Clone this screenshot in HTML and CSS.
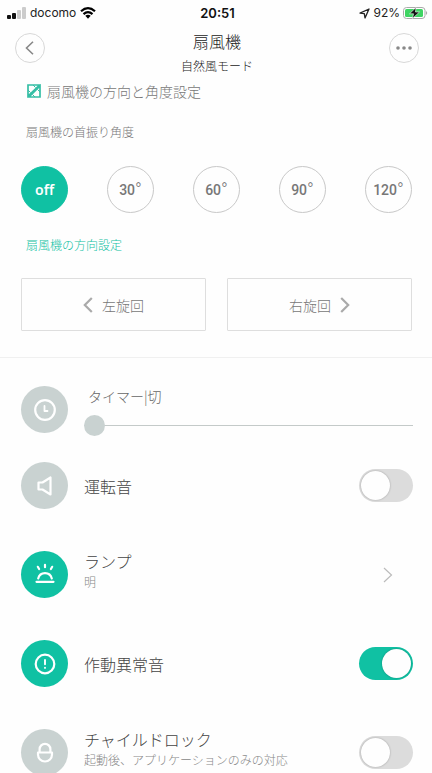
FILE: index.html
```html
<!DOCTYPE html>
<html lang="ja">
<head>
<meta charset="utf-8">
<meta name="viewport" content="width=device-width, initial-scale=1">
<title>扇風機</title>
<link rel="stylesheet" href="styles.css">
</head>
<body>
<div class="status">
  <div class="status-left">
    <svg width="19" height="12" viewBox="0 0 19 12"><g fill="#111"><rect x="0" y="8" width="4" height="4" rx="1"/><rect x="5" y="6" width="4" height="6" rx="1"/></g><g fill="#ccc"><rect x="10" y="3" width="4" height="9" rx="1"/><rect x="15" y="0" width="4" height="12" rx="1"/></g></svg>
    <span>docomo</span>
    <svg width="16" height="12" viewBox="0 0 16 12" fill="none" stroke="#000" stroke-width="2.2"><path d="M1 4.3Q8-2 15 4.3M3.5 7.1Q8 3.200 12.500 7.100"/><path d="M5.300 8.700Q8 6.600 10.700 8.700L8 11.700Z" fill="#000" stroke="none"/></svg>
  </div>
  <strong>20:51</strong>
  <div class="status-right">
    <svg width="11" height="11" viewBox="0 0 11 11" fill="none" stroke="#222" stroke-width="1.300" stroke-linejoin="round"><path d="M1 5.200 10 1 6 10 5.300 5.700Z"/></svg>
    <span>92%</span>
    <svg width="25" height="12" viewBox="0 0 25 12"><rect x=".5" y=".5" width="21.500" height="11" rx="3" fill="#fff" stroke="#aaa"/><rect x="2" y="2" width="18" height="8" rx="1.500" fill="#3fd463"/><path d="M23.200 4q2 2 0 4Z" fill="#999"/><path d="M13 .500 6.500 6.800h4L9.500 11.500 16.500 5h-4Z" fill="#111" stroke="#fff" stroke-width=".6"/></svg>
  </div>
</div>

<header class="header">
  <button class="round" type="button" aria-label="戻る"><svg width="10" height="14" viewBox="0 0 10 14" fill="none" stroke="#888" stroke-width="1.600"><path d="M8 .700 1.500 7 8 13.300"/></svg></button>
  <div class="heading">
    <h1>扇風機</h1>
    <p>自然風モード</p>
  </div>
  <button class="round" type="button" aria-label="メニュー"><svg width="16" height="4" viewBox="0 0 16 4" fill="#888"><circle cx="2" cy="2" r="1.800"/><circle cx="8" cy="2" r="1.800"/><circle cx="14" cy="2" r="1.800"/></svg></button>
</header>

<main>
  <section class="direction">
    <h2><svg width="14" height="14" viewBox="0 0 14 14" fill="none" stroke="#35bea5" stroke-width="1.700"><path d="M1 12V1h11.500ZM13 2v11H2Z"/><path d="M3.500 8.500 1 6M8.500 3.500 6 1M13 8l-2.500-2.500M8 13l-2.500-2.500" stroke-width="1"/></svg>扇風機の方向と角度設定</h2>
    <h3>扇風機の首振り角度</h3>
    <div class="angles">
      <button class="angle selected" type="button">off</button>
      <button class="angle" type="button">30<span>°</span></button>
      <button class="angle" type="button">60<span>°</span></button>
      <button class="angle" type="button">90<span>°</span></button>
      <button class="angle" type="button">120<span>°</span></button>
    </div>
    <h3 class="accent">扇風機の方向設定</h3>
    <div class="turns">
      <button class="turn" type="button"><svg width="10" height="16" viewBox="0 0 10 16" fill="none" stroke="#aaa" stroke-width="2.200"><path d="M8.800 1 1.800 8l7 7"/></svg>左旋回</button>
      <button class="turn" type="button">右旋回<svg width="10" height="16" viewBox="0 0 10 16" fill="none" stroke="#aaa" stroke-width="2.200"><path d="m1.200 1 7 7-7 7"/></svg></button>
    </div>
  </section>

  <section class="settings">
    <div class="row timer">
      <span class="badge"><svg width="24" height="24" viewBox="0 0 24 24"><circle cx="12" cy="12" r="9.800"/><path d="M11.500 8v5h3" stroke-width="1.800"/></svg></span>
      <div class="timer-body">
        <label for="timer">タイマー|切</label>
        <input class="slider" id="timer" type="range" min="0" max="12" value="0">
      </div>
    </div>
    <div class="row">
      <span class="badge"><svg width="24" height="24" viewBox="0 0 24 24"><path d="M5.500 8.500h4L17.500 3.500v17l-8-5h-4Z"/></svg></span>
      <label class="text" for="sound"><span class="name">運転音</span></label>
      <input class="toggle" id="sound" type="checkbox">
    </div>
    <a class="row" href="#lamp">
      <span class="badge on"><svg width="24" height="24" viewBox="0 0 24 24"><path d="M3.500 18.800h17M5.200 15.500a7 7 0 0 1 13.600 0M12 1.800v2.400M4.800 3.800l1.300 2.200M19.200 3.800l-1.300 2.200"/></svg></span>
      <span class="text double"><span class="name">ランプ</span><small>明</small></span>
      <svg class="chevron" width="10" height="16" viewBox="0 0 10 16" fill="none" stroke="#bbb" stroke-width="1.200"><path d="m1 1 7.500 7L1 15"/></svg>
    </a>
    <div class="row">
      <span class="badge on"><svg width="24" height="24" viewBox="0 0 24 24"><circle cx="12" cy="12" r="9.300"/><path d="M12 8v4.300M12 15.700v.200" stroke-width="1.900"/></svg></span>
      <label class="text" for="alarm"><span class="name">作動異常音</span></label>
      <input class="toggle" id="alarm" type="checkbox" checked>
    </div>
    <div class="row">
      <span class="badge"><svg width="24" height="24" viewBox="0 0 24 24"><path d="M5 11.500h14v2a7 7 0 0 1-14 0ZM6.600 11.500V8.200a5.400 5.400 0 0 1 10.800 0v3.300"/></svg></span>
      <label class="text double" for="lock"><span class="name">チャイルドロック</span><small>起動後、アプリケーションのみの対応</small></label>
      <input class="toggle" id="lock" type="checkbox">
    </div>
  </section>
</main>
</body>
</html>
```
FILE: styles.css
```css
:root {
  --teal: #10c1a3;
  --grey: #c9d2d1;
}

* { box-sizing: border-box; }

body {
  margin: 0;
  height: 100vh;
  overflow: hidden;
  display: flex;
  flex-direction: column;
  background: #fefefe;
  color: #555;
  font-family: "Noto Sans CJK JP", sans-serif;
  font-weight: 300;
}

h1, h2, h3, p { margin: 0; font-weight: 300; }

button {
  padding: 0;
  background: #fefefe;
  font: inherit;
  color: inherit;
}

svg { display: block; flex: none; }

.status {
  flex: none;
  display: grid;
  grid-template-columns: 1fr auto 1fr;
  align-items: center;
  height: 26px;
  padding: 0 4px 0 7px;
  color: #222;
  font: 400 12px/26px Inter, sans-serif;
}

.status strong { color: #111; font-size: 13px; font-weight: 600; }

.status-left, .status-right {
  display: flex;
  align-items: center;
  gap: 4px;
}

.status-right { justify-content: flex-end; gap: 3px; }

.header {
  flex: none;
  display: flex;
  justify-content: space-between;
  padding: 3px 13px 0 15px;
  color: #222;
}

.heading { text-align: center; }
.heading h1 { font-size: 16px; line-height: 24px; }
.heading p { font-size: 12px; line-height: 25px; }

.round {
  display: grid;
  place-items: center;
  width: 30px;
  height: 30px;
  margin-top: 4px;
  border: 1px solid #d8d8d8;
  border-radius: 50%;
}

main {
  flex: 1;
  min-height: 0;
  overflow-y: auto;
  scrollbar-width: none;
}

.direction {
  padding: 0 20px 26px 21px;
  border-bottom: 1px solid #f0f0f0;
}

.direction h2 {
  display: flex;
  align-items: center;
  gap: 6px;
  padding-left: 6px;
  color: #777;
  font-size: 14px;
  line-height: 26px;
}

.direction h3 {
  padding: 18px 0 0 5px;
  color: #777;
  font-size: 12px;
  line-height: 20px;
}

.direction .accent { padding-top: 22px; color: var(--teal); }

.angles {
  display: flex;
  justify-content: space-between;
  padding-top: 24px;
}

.angle {
  display: flex;
  align-items: center;
  justify-content: center;
  width: 47px;
  height: 47px;
  border: 1px solid #c8c8c8;
  border-radius: 50%;
  color: #777;
  font: 500 14px/20px Roboto, sans-serif;
}

.angle span { font-size: 18px; font-weight: 300; }

.angle.selected {
  border-color: var(--teal);
  background: var(--teal);
  color: #fff;
  font: 600 14px/20px "Noto Sans", sans-serif;
}

.turns {
  display: grid;
  grid-template-columns: 1fr 1fr;
  gap: 21px;
  padding-top: 23px;
}

.turn {
  display: flex;
  align-items: center;
  justify-content: center;
  gap: 9px;
  height: 53px;
  border: 1px solid #dedede;
  border-radius: 1px;
  color: #777;
  font-size: 14px;
}

.row {
  display: flex;
  align-items: center;
  gap: 16px;
  height: 89px;
  padding: 0 19px 0 21px;
  color: #444;
  text-decoration: none;
}

.row.timer {
  align-items: flex-start;
  height: 83px;
  padding-top: 28px;
}

.badge {
  flex: none;
  display: grid;
  place-items: center;
  width: 47px;
  height: 47px;
  border-radius: 50%;
  background: var(--grey);
}

.badge.on { background: var(--teal); }

.badge svg {
  fill: none;
  stroke: #fff;
  stroke-width: 2.2;
  stroke-linecap: round;
  stroke-linejoin: round;
}

.timer-body { flex: 1; display: flex; flex-direction: column; }

.timer-body label {
  padding-left: 4px;
  color: #666;
  font-size: 14px;
  line-height: 20px;
}

.slider {
  appearance: none;
  width: 100%;
  height: 21px;
  margin: 9px 0 0;
  background: linear-gradient(#c4cac9, #c4cac9) center / 100% 1px no-repeat;
}

.slider::-webkit-slider-thumb {
  appearance: none;
  width: 21px;
  height: 21px;
  border-radius: 50%;
  background: var(--grey);
}

.slider::-moz-range-thumb {
  width: 21px;
  height: 21px;
  border: 0;
  border-radius: 50%;
  background: var(--grey);
}

.text { flex: 1; display: flex; flex-direction: column; }
.double { padding-bottom: 8px; }
.name { font-size: 16px; line-height: 22px; }
.text small { color: #888; font-size: 12px; line-height: 20px; }

.chevron { margin-right: 20px; }

.toggle {
  appearance: none;
  flex: none;
  display: flex;
  align-items: center;
  width: 54px;
  height: 33px;
  margin: 0;
  padding: 2px;
  border-radius: 17px;
  background: #dcdcdc;
}

.toggle::before {
  content: "";
  width: 29px;
  height: 29px;
  border-radius: 50%;
  background: #fefefe;
  box-shadow: 0 0 2px rgba(0, 0, 0, 0.3);
}

.toggle:checked { justify-content: flex-end; background: var(--teal); }
```
